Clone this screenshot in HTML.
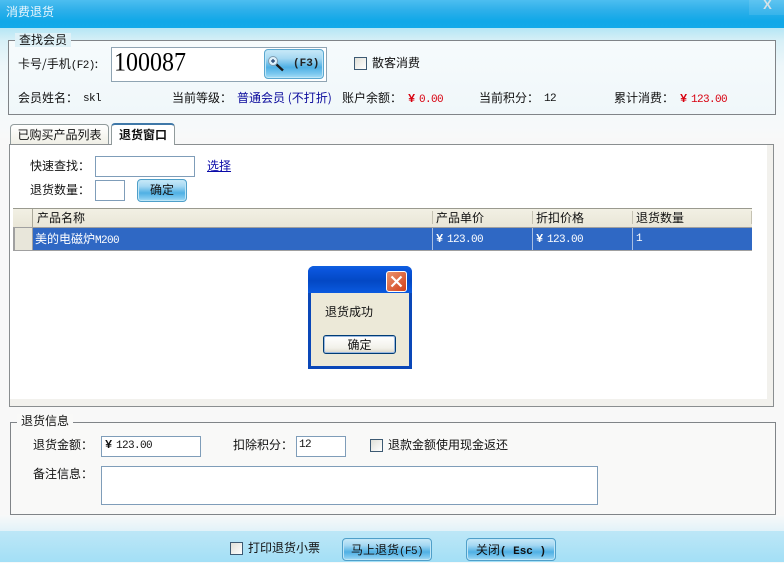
<!DOCTYPE html>
<html><head><meta charset="utf-8">
<style>
html,body{margin:0;padding:0}
body{width:784px;height:562px;overflow:hidden;position:relative;background:#f8f8f8;font:12px/14px "WenQuanYi Zen Hei","Noto Sans CJK SC",sans-serif;color:#111}
.a{position:absolute;white-space:nowrap}
.m{font-family:"Liberation Mono",monospace;font-size:11px;letter-spacing:-.6px}
.y{display:inline-block;width:11px;font-weight:bold;letter-spacing:0;font-size:12px}
.box{position:absolute;border:1px solid #808488;box-sizing:border-box}
.lg{position:absolute;background:#f4f9fb;padding:0 4px;height:14px;line-height:14px}
.inp{position:absolute;box-sizing:border-box;background:#fff;border:1px solid #7f9db9}
.btn{position:absolute;box-sizing:border-box;border:1px solid #4f9fc9;border-radius:4px;background:linear-gradient(#c9e9f8 0,#a5d8f2 30%,#4fb0e4 62%,#7cc8ef 85%,#a8def5 100%);text-align:center;box-shadow:inset 0 0 0 1px #bfe6f7}
.cb{position:absolute;box-sizing:border-box;width:13px;height:13px;border:1px solid #3d5a73;background:linear-gradient(135deg,#e0e0d8,#fff)}
.red{color:#d8000f}
.th{position:absolute;top:209px;height:18px;line-height:17px}
.sep{position:absolute;top:211px;width:1px;height:13px;background:#c5c2b2}
.td{position:absolute;top:228px;height:22px;line-height:22px;color:#fff}
.vl{position:absolute;top:228px;width:1px;height:22px;background:#a9bfe2}
</style></head>
<body>
<!-- title -->
<div class="a" style="left:0;top:0;width:784px;height:28px;background:linear-gradient(#4cbef0 0,#2fb0ea 35%,#10a8e8 75%,#12a9e9 100%)"></div>
<div class="a" style="left:6px;top:5px;color:#e8f6fd;font-size:12px">消费退货</div>
<div class="a" style="left:749px;top:0;width:35px;height:15px;background:rgba(255,255,255,.1)"></div>
<div class="a" style="left:749px;top:-1px;width:35px;padding-left:2px;box-sizing:border-box;text-align:center;color:#d5e2e8;font:bold 13px/12px 'Liberation Sans',sans-serif">X</div>
<!-- bg gradient -->
<div class="a" style="left:0;top:28px;width:784px;height:110px;background:linear-gradient(#b5e6f5 0,#d8f0f7 12%,#eef7fa 35%,#f3f9fb 70%,#f8f9f9 100%)"></div>
<!-- group 1 -->
<div class="box" style="left:8px;top:40px;width:768px;height:75px;background:linear-gradient(#f6fbfc,#f0f7fa)"></div>
<div class="lg" style="left:15px;top:33px;background:#dff1f7">查找会员</div>
<div class="a" style="left:18px;top:57px">卡号/手机<span class="m">(F2)</span>:</div>
<div class="inp" style="left:111px;top:47px;width:216px;height:35px;border-color:#8fa4b3"></div>
<div class="a" style="left:114px;top:49px;font:24px/28px 'Liberation Serif',serif;color:#000;transform:scaleY(1.08);transform-origin:0 50%">100087</div>
<div class="btn" style="left:264px;top:49px;width:60px;height:30px;border-color:#5aa7cf"></div>
<svg class="a" style="left:267px;top:55px" width="18" height="18" viewBox="0 0 18 18"><circle cx="6" cy="6" r="4.5" fill="#dff1fb" stroke="#7f9cb0" stroke-width="1"/><path d="M4 6h4M6 4v4" stroke="#1c3c6a" stroke-width="1.2"/><path d="M9.5 9.5L16 15.5" stroke="#1a1a1a" stroke-width="2.4"/></svg>
<div class="a m" style="left:293px;top:57px;font-weight:bold;letter-spacing:0;color:#222">(F3)</div>
<div class="cb" style="left:354px;top:57px"></div>
<div class="a" style="left:372px;top:56px">散客消费</div>
<div class="a" style="left:18px;top:91px">会员姓名：</div><div class="a m" style="left:83px;top:92px">skl</div>
<div class="a" style="left:172px;top:91px">当前等级：</div>
<div class="a" style="left:237px;top:91px;color:#0a0a9c">普通会员 (不打折)</div>
<div class="a" style="left:342px;top:91px">账户余额：</div>
<div class="a red m" style="left:408px;top:92px"><span class="y">¥</span>0.00</div>
<div class="a" style="left:479px;top:91px">当前积分：</div><div class="a m" style="left:544px;top:92px">12</div>
<div class="a" style="left:614px;top:91px">累计消费：</div>
<div class="a red m" style="left:680px;top:92px"><span class="y">¥</span>123.00</div>
<!-- tabs -->
<div class="a" style="left:10px;top:124px;width:99px;height:20px;box-sizing:border-box;border:1px solid #919b9c;border-bottom:none;border-radius:4px 4px 0 0;background:linear-gradient(#fff,#f0efe6);text-align:center;line-height:20px">已购买产品列表</div>
<div class="box" style="left:9px;top:144px;width:765px;height:263px;background:#f2f1ed;border-color:#8a8e90"></div>
<div class="a" style="left:10px;top:145px;width:757px;height:254px;background:#fff"></div>
<div class="a" style="left:111px;top:123px;width:64px;height:22px;box-sizing:border-box;border:1px solid #919b9c;border-top:2px solid #3f78a8;border-bottom:none;border-radius:4px 4px 0 0;background:#fff;text-align:center;line-height:20px;font-weight:bold">退货窗口</div>
<div class="a" style="left:30px;top:159px">快速查找：</div>
<div class="inp" style="left:95px;top:156px;width:100px;height:21px"></div>
<div class="a" style="left:207px;top:159px;color:#0a0aa8;text-decoration:underline">选择</div>
<div class="a" style="left:30px;top:183px">退货数量：</div>
<div class="inp" style="left:95px;top:180px;width:30px;height:21px"></div>
<div class="btn" style="left:137px;top:179px;width:50px;height:23px;line-height:20px">确定</div>
<!-- grid -->
<div class="a" style="left:13px;top:208px;width:739px;height:1px;background:#9a9a8f"></div>
<div class="a" style="left:13px;top:209px;width:739px;height:18px;background:linear-gradient(#f2f0e4,#e9e6d7)"></div>
<div class="a" style="left:13px;top:227px;width:739px;height:24px;background:#a0a0a0"></div>
<div class="a" style="left:15px;top:228px;width:17px;height:22px;background:#e8e6da"></div>
<div class="a" style="left:33px;top:228px;width:719px;height:22px;background:#2f68c4"></div>
<div class="a" style="left:32px;top:209px;width:1px;height:18px;background:#aaa89a"></div>
<div class="th" style="left:37px">产品名称</div>
<div class="sep" style="left:432px"></div><div class="th" style="left:436px">产品单价</div>
<div class="sep" style="left:532px"></div><div class="th" style="left:536px">折扣价格</div>
<div class="sep" style="left:632px"></div><div class="th" style="left:636px">退货数量</div>
<div class="sep" style="left:751px"></div>
<div class="td" style="left:35px">美的电磁炉<span class="m">M200</span></div>
<div class="vl" style="left:432px"></div><div class="td m" style="left:436px"><span class="y">¥</span>123.00</div>
<div class="vl" style="left:532px"></div><div class="td m" style="left:536px"><span class="y">¥</span>123.00</div>
<div class="vl" style="left:632px"></div><div class="td m" style="left:636px">1</div>
<!-- message box -->
<div class="a" style="left:308px;top:266px;width:104px;height:103px;background:#0a47b8;border-radius:6px 6px 0 0"></div>
<div class="a" style="left:308px;top:266px;width:104px;height:27px;background:linear-gradient(#0f5fe0 0,#0a55dc 15%,#0348c4 55%,#0a5ae0 100%);border-radius:6px 6px 0 0"></div>
<div class="a" style="left:311px;top:293px;width:98px;height:73px;background:#ece9d8"></div>
<div class="a" style="left:386px;top:271px;width:21px;height:21px;box-sizing:border-box;border:1px solid #fff;border-radius:3px;background:linear-gradient(135deg,#e9946f,#d2401a)"></div>
<svg class="a" style="left:386px;top:271px" width="21" height="21"><path d="M5.5 5.5l10 10M15.5 5.5l-10 10" stroke="#fff" stroke-width="2.2"/></svg>
<div class="a" style="left:325px;top:305px">退货成功</div>
<div class="a" style="left:323px;top:335px;width:73px;height:19px;box-sizing:border-box;border:1px solid #003c74;border-radius:3px;background:linear-gradient(#fff,#f2f1ea 70%,#dcd8c8);text-align:center;line-height:17px;box-shadow:inset 0 0 0 1px #9ab8e0">确定</div>
<!-- group 2 -->
<div class="box" style="left:10px;top:422px;width:766px;height:93px;background:#f9f9f8"></div>
<div class="lg" style="left:17px;top:414px;background:#f9f9f8">退货信息</div>
<div class="a" style="left:33px;top:438px">退货金额：</div>
<div class="inp" style="left:101px;top:436px;width:100px;height:21px"></div>
<div class="a m" style="left:105px;top:438px;color:#111"><span class="y">¥</span>123.00</div>
<div class="a" style="left:233px;top:438px">扣除积分：</div>
<div class="inp" style="left:296px;top:436px;width:50px;height:21px"></div>
<div class="a m" style="left:299px;top:438px">12</div>
<div class="cb" style="left:370px;top:439px"></div>
<div class="a" style="left:388px;top:438px">退款金额使用现金返还</div>
<div class="a" style="left:33px;top:467px">备注信息：</div>
<div class="inp" style="left:101px;top:466px;width:497px;height:39px"></div>
<!-- footer -->
<div class="a" style="left:0;top:515px;width:784px;height:16px;background:linear-gradient(#f8f9f9,#e2f2f9)"></div>
<div class="a" style="left:0;top:531px;width:784px;height:31px;background:linear-gradient(#bde7f7,#a3dff6)"></div>
<div class="cb" style="left:230px;top:542px"></div>
<div class="a" style="left:248px;top:541px">打印退货小票</div>
<div class="btn" style="left:342px;top:538px;width:90px;height:23px;line-height:21px">马上退货<span class="m">(F5)</span></div>
<div class="btn" style="left:466px;top:538px;width:90px;height:23px;line-height:21px">关闭<span class="m" style="font-weight:bold;letter-spacing:0">( Esc )</span></div>
</body></html>
